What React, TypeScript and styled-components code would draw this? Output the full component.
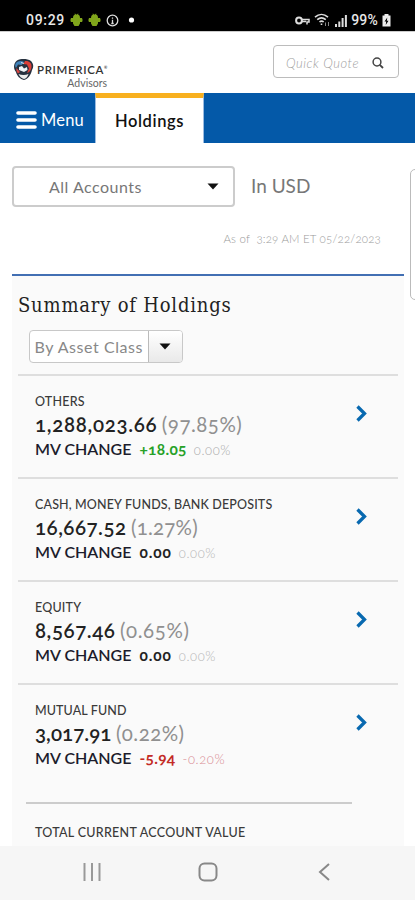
import React from "react";
import styled, { createGlobalStyle } from "styled-components";

const GlobalStyle = createGlobalStyle`
  * { box-sizing: border-box; }
  body { margin: 0; background: #fff; overflow: hidden; }
`;

const Screen = styled.div`
  width: 415px;
  height: 900px;
  display: flex;
  flex-direction: column;
  overflow: hidden;
  background: #fff;
  color: #222;
  font-family: Lato, "Open Sans", sans-serif;
  font-variant-numeric: oldstyle-nums;
  white-space: nowrap;
`;

const StatusBar = styled.div`
  height: 31px;
  flex: none;
  display: flex;
  justify-content: space-between;
  padding: 9px 24px 0 26px;
  background: #000;
  color: #e8e8e8;
  font: 500 14px/20px Roboto, sans-serif;
`;

const StatusGroup = styled.div<{ $gap: number }>`
  display: flex;
  align-items: center;
  gap: ${(p) => p.$gap}px;
  height: 22px;
`;

const StatusText = styled.span<{ $spacing: number }>`
  letter-spacing: ${(p) => p.$spacing}px;
`;

const Header = styled.header`
  height: 62px;
  flex: none;
  display: flex;
  justify-content: space-between;
  padding: 13px 16px 0 13px;
  border-top: 1px solid #ccc;
`;

const Brand = styled.div`
  display: flex;
  gap: 3px;
  padding-top: 14px;
`;

const BrandWords = styled.div`
  width: 72px;
  padding-top: 4px;
  display: flex;
  flex-direction: column;
`;

const BrandName = styled.span`
  font: 600 11.5px/13px Lato, sans-serif;
  letter-spacing: 0.65px;
  color: #333;
  sup { font-size: 4px; line-height: 0; letter-spacing: 0; vertical-align: 5px; }
`;

const BrandSub = styled.span`
  align-self: flex-end;
  margin-right: 2px;
  font-size: 10.5px;
  line-height: 14px;
  color: #666;
`;

const QuoteBox = styled.div`
  width: 126px;
  height: 33px;
  display: flex;
  align-items: center;
  justify-content: space-between;
  padding: 2px 14px 0 12px;
  border: 1.5px solid #bcbcbc;
  border-radius: 4px;
  font-style: italic;
  font-weight: 300;
  font-size: 13px;
  letter-spacing: 0.55px;
  color: #a2a2a2;
`;

const NavBar = styled.nav`
  height: 50px;
  flex: none;
  display: flex;
  background: #0459a8;
`;

const MenuButton = styled.div`
  width: 95px;
  display: flex;
  align-items: center;
  gap: 4px;
  padding: 4px 0 0 16px;
  color: #fff;
  font-size: 16.5px;
  letter-spacing: 0.2px;
`;

const ActiveTab = styled.div`
  width: 109px;
  border-top: 5px solid #f8b01f;
  border-left: 1px solid #9bbbe0;
  border-right: 1px solid #9bbbe0;
  background: #fff;
  color: #111;
  text-align: center;
  font: 600 16.5px/46px Lato, sans-serif;
  letter-spacing: 0.6px;
`;

const Body = styled.div`
  flex: 1;
  min-height: 0;
  display: flex;
  gap: 6px;
  padding-left: 12px;
  overflow: hidden;
`;

const Column = styled.main`
  width: 392px;
  flex: none;
  display: flex;
  flex-direction: column;
`;

const SidePanel = styled.aside`
  width: 60px;
  height: 131px;
  flex: none;
  margin-top: 26px;
  border: 1.5px solid #bbb;
  border-radius: 5px;
`;

const Filters = styled.div`
  display: flex;
  gap: 16px;
  padding-top: 23px;
`;

const AccountSelect = styled.div`
  width: 223px;
  height: 41px;
  display: flex;
  align-items: center;
  justify-content: space-between;
  padding: 0 14px 1px 35px;
  border: 2px solid #ccc;
  border-radius: 4px;
  font-size: 16px;
  letter-spacing: 0.5px;
  color: #777;
`;

const Currency = styled.span`
  font-size: 19px;
  line-height: 39px;
  color: #777;
`;

const AsOf = styled.div`
  height: 67px;
  padding: 22px 23px 0 0;
  text-align: right;
  font-size: 11.5px;
  font-weight: 300;
  line-height: 20px;
  letter-spacing: 0.17px;
  white-space: pre;
  color: #999;
`;

const Card = styled.section`
  flex: 1;
  padding: 0 6px;
  border-top: 2px solid #426fb3;
  background: #fafafa;
`;

const Title = styled.h1`
  margin: 0;
  height: 54px;
  padding-top: 14px;
  font: 400 20px/30px "DejaVu Serif Condensed", "DejaVu Serif", serif;
  letter-spacing: 0.8px;
  color: #222;
`;

const ClassSelect = styled.div`
  width: 154px;
  height: 33px;
  display: flex;
  margin: 0 0 11px 10.5px;
  border: 1.5px solid #c8c8c8;
  border-radius: 4px;
  background: #fff;
  overflow: hidden;
`;

const ClassLabel = styled.span`
  flex: 1;
  padding-left: 5px;
  font-size: 16px;
  line-height: 31px;
  letter-spacing: 0.55px;
  color: #888;
`;

const ClassToggle = styled.span`
  width: 34px;
  display: flex;
  align-items: center;
  justify-content: center;
  border-left: 1.5px solid #bbb;
  background: linear-gradient(#fff, #e9e9e9);
`;

const Row = styled.article`
  height: 103px;
  display: flex;
  justify-content: space-between;
  border-top: 2px solid #dedede;
  padding: 16px 31px 0 17px;
`;

const RowChevron = styled.div`
  padding-top: 13px;
`;

const Label = styled.div<{ $spacing?: number }>`
  font-size: 12.5px;
  font-weight: 500;
  line-height: 20px;
  letter-spacing: ${(p) => p.$spacing ?? 0.2}px;
  color: #3a3a3a;
`;

const Amount = styled.div`
  display: flex;
  gap: 4.5px;
  font-size: 20.5px;
  font-weight: 600;
  line-height: 25px;
  color: #222;
`;

const Share = styled.span<{ $spacing: number }>`
  font-weight: 400;
  letter-spacing: ${(p) => p.$spacing}px;
  color: #909090;
`;

const Figure = styled.span<{ $spacing: number }>`
  letter-spacing: ${(p) => p.$spacing}px;
`;

const tones = {
  up: ["#27a127", "#aaa"],
  flat: ["#222", "#b5b5b5"],
  down: ["#c32a25", "#d98a92"],
};
type Tone = keyof typeof tones;

const Change = styled.div<{ $tone: Tone }>`
  display: flex;
  align-items: baseline;
  font-size: 16px;
  font-weight: 600;
  line-height: 24px;
  color: #1c1c2c;
  b { margin-left: 8px; font-weight: 700; font-size: 15.5px; letter-spacing: ${(p) => (p.$tone === "flat" ? 0.9 : 0.3)}px; color: ${(p) => tones[p.$tone][0]}; }
  small { margin-left: 7px; font-weight: 300; font-size: 13px; letter-spacing: 0.6px; color: ${(p) => tones[p.$tone][1]}; }
`;

const Total = styled.div`
  width: 326px;
  margin: 16px 0 0 8px;
  padding: 19px 0 0 9px;
  border-top: 2px solid #ccc;
`;

const SystemNav = styled.footer`
  height: 54px;
  flex: none;
  display: flex;
  align-items: center;
  justify-content: space-between;
  padding: 0 85px 2px 83px;
  background: #f6f6f6;
`;

const HomeIcon = styled.svg`
  margin-right: 4px;
`;

const Caret = () => (
  <svg width="12" height="7" viewBox="0 0 12 7"><path d="M.5.5h11L6 6.5z" fill="#111" /></svg>
);

const Android = () => (
  <svg width="13" height="14" viewBox="0 0 13 14" fill="#80a51b">
    <path d="M3 5C3 3 4 2 5 1.600L4.400.7h1l.5.7h1.200l.5-.7h1L8 1.600C9.200 2 10 3 10 5h2l.5 1.500V8L12 9h-2v1.500L8.500 13h-4L3 10.500V9H1L.5 8V6.500L1 5z" />
  </svg>
);

const rows: { name: string; value: string; share: string; change: string; pct: string; tone: Tone; ls: number; ss: number; ns?: number }[] = [
  { name: "OTHERS", value: "1,288,023.66", share: "(97.85%)", change: "+18.05", pct: "0.00%", tone: "up", ls: 0.7, ss: 0.5 },
  { name: "CASH, MONEY FUNDS, BANK DEPOSITS", value: "16,667.52", share: "(1.27%)", change: "0.00", pct: "0.00%", tone: "flat", ls: 0.5, ss: 0.2, ns: 0.14 },
  { name: "EQUITY", value: "8,567.46", share: "(0.65%)", change: "0.00", pct: "0.00%", tone: "flat", ls: 0.55, ss: 0.6 },
  { name: "MUTUAL FUND", value: "3,017.91", share: "(0.22%)", change: "-5.94", pct: "-0.20%", tone: "down", ls: 0.05, ss: 0.45, ns: 0.1 },
];

export default function App() {
  return (
    <Screen>
      <GlobalStyle />
      <StatusBar>
        <StatusGroup $gap={5}>
          <StatusText $spacing={0.7}>09:29</StatusText>
          <Android />
          <Android />
          <svg width="13" height="13" viewBox="0 0 13 13" fill="none" stroke="#ddd">
            <circle cx="6.500" cy="6.500" r="5.300" strokeWidth="1.300" /><path d="M6.500 3.500v1.200M6.500 5.700v4M5.300 9.500h2.400" strokeWidth="1.300" />
          </svg>
          <svg width="19" height="8" viewBox="0 0 19 8"><circle cx="7.500" cy="4" r="2.600" fill="#fff" /></svg>
        </StatusGroup>
        <StatusGroup $gap={4}>
          <svg width="15" height="9" viewBox="0 0 15 9" fill="none" stroke="#ddd" strokeWidth="2">
            <circle cx="4" cy="4.500" r="2.900" /><path d="M7 3.500h7v2.500h-2v2.500M7 5.500h4" strokeWidth="1.500" />
          </svg>
          <svg width="17" height="14" viewBox="0 0 17 14" fill="none" stroke="#ddd" strokeWidth="1.600">
            <path d="M1 4.200c4-3.600 9-3.600 13 0M3.200 6.600c3-2.400 5.600-2.400 8.600 0M5.500 9c1.500-1.200 2.700-1.200 4.200 0M7.500 10.500v1.500" /><path d="M11.500 13V9.500M14.500 9v4" strokeWidth="1" stroke="#888" />
          </svg>
          <svg width="12" height="13" viewBox="0 0 12 13" fill="#ddd">
            <path d="M0 10h2v3H0zM3.300 7.500h2V13h-2zM6.600 4h2v9h-2zM9.900 1h2v12h-2z" />
          </svg>
          <StatusText $spacing={0.2}>99%</StatusText>
          <svg width="9" height="13" viewBox="0 0 9 13">
            <path d="M2.500 0h4v1.500H8.500V12.500H.5V1.500h2z" fill="#eee" /><path d="M5.300 3.500L2.500 7.500h1.700L3.700 11l2.800-4.300H4.800z" fill="#000" />
          </svg>
        </StatusGroup>
      </StatusBar>

      <Header>
        <Brand>
          <svg width="21" height="22" viewBox="0 0 21 22">
            <path d="M4 1.500C8-.5 14-.5 18 2c2.500 2.500 3 6 1 9-1 5-4 9-8 10-4-1-7-4-8-8-3-3-2.500-9 1-11.500z" fill="#26313f" />
            <path d="M4 3c2.500-1.500 5-1.500 7 0L8.500 6 5 5.500 3 9C1.500 7 2 4.500 4 3z" fill="#3f82ba" />
            <path d="M12 2c4-.5 7 2 6.500 6-.3 3-2 5.500-4.500 6l2-4.500-2-4-3.500-.5z" fill="#dc3f38" />
            <path d="M6 8l3-1 2 2.500 3-1.500.5 3-3.500 2-5-2z" fill="#eef3f7" />
            <path d="M3.500 9l3.500 4-2 1.500c-1.500-1.500-2-3.500-1.500-5.500z" fill="#d94741" />
            <path d="M5.500 15c3 1.200 7 1.200 10 0-1 3-2.500 4.500-4.500 5-2.500-.5-4.500-2.500-5.500-5z" fill="#ececec" />
            <path d="M8.500 9.500l2 1.500M8 3.500l3 1" stroke="#fff" strokeWidth=".8" />
          </svg>
          <BrandWords>
            <BrandName>PRIMERICA<sup>®</sup></BrandName>
            <BrandSub>Advisors</BrandSub>
          </BrandWords>
        </Brand>
        <QuoteBox>
          Quick Quote
          <svg width="12" height="12" viewBox="0 0 12 12" fill="none" stroke="#444" strokeWidth="1.500">
            <circle cx="5" cy="5" r="3.900" /><path d="M7.800 7.800L11 11" strokeWidth="1.800" />
          </svg>
        </QuoteBox>
      </Header>

      <NavBar>
        <MenuButton>
          <svg width="21" height="18" viewBox="0 0 21 18" stroke="#fff" strokeWidth="3.600" strokeLinecap="round"><path d="M2 2h17M2 9h17M2 16h17" /></svg>
          Menu
        </MenuButton>
        <ActiveTab>Holdings</ActiveTab>
      </NavBar>

      <Body>
        <Column>
          <Filters>
            <AccountSelect>All Accounts<Caret /></AccountSelect>
            <Currency>In USD</Currency>
          </Filters>
          <AsOf>{"As of  3:29 AM ET 05/22/2023"}</AsOf>
          <Card>
            <Title>Summary of Holdings</Title>
            <ClassSelect>
              <ClassLabel>By Asset Class</ClassLabel>
              <ClassToggle><Caret /></ClassToggle>
            </ClassSelect>
            {rows.map((r) => (
              <Row key={r.name}>
                <div>
                  <Label $spacing={r.ns}>{r.name}</Label>
                  <Amount>
                    <Figure $spacing={r.ls}>{r.value}</Figure>
                    <Share $spacing={r.ss}>{r.share}</Share>
                  </Amount>
                  <Change $tone={r.tone}>MV CHANGE<b>{r.change}</b><small>{r.pct}</small></Change>
                </div>
                <RowChevron>
                  <svg width="11" height="17" viewBox="0 0 11 17" fill="none" stroke="#0869b0" strokeWidth="3.300"><path d="M1.500 1.500L8.500 8.500L1.500 15.500" /></svg>
                </RowChevron>
              </Row>
            ))}
            <Total><Label $spacing={0.28}>TOTAL CURRENT ACCOUNT VALUE</Label></Total>
          </Card>
        </Column>
        <SidePanel />
      </Body>

      <SystemNav>
        <svg width="18" height="18" viewBox="0 0 18 18" stroke="#999" strokeWidth="2"><path d="M1.500 0v18M9 0v18M16.500 0v18" /></svg>
        <HomeIcon width="20" height="20" viewBox="0 0 20 20" fill="none" stroke="#888" strokeWidth="2"><rect x="1.500" y="1.500" width="17" height="17" rx="5" /></HomeIcon>
        <svg width="12" height="18" viewBox="0 0 12 18" fill="none" stroke="#888" strokeWidth="2"><path d="M11 1L2 9l9 8" /></svg>
      </SystemNav>
    </Screen>
  );
}
